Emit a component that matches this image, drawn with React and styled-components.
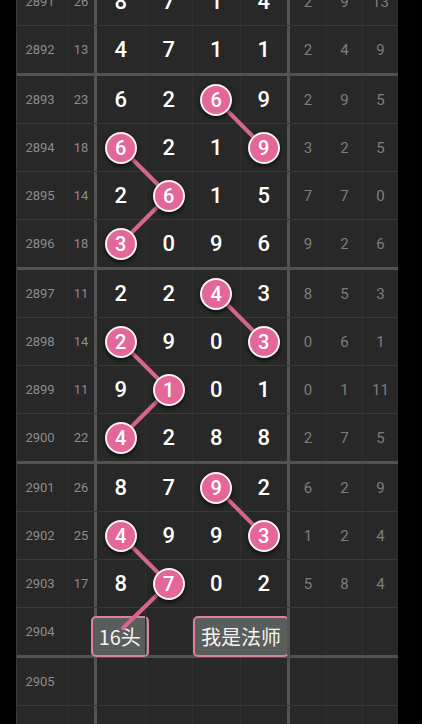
import React from 'react'
import styled, { createGlobalStyle } from 'styled-components'

const GlobalStyle = createGlobalStyle`
  html, body {
    margin: 0;
    background: #000;
  }
  body {
    font-family: Roboto, "Noto Sans CJK SC", sans-serif;
    overflow: hidden;
  }
`

const ROW_H = 47
const COLS = '50px 27px 50.5px 47.5px 47.5px 47.5px 39px 36px 36px'
// centres of the four digit columns, measured from the board's inner left edge
const DIGIT_X = [103.75, 151.75, 199.25, 246.75]

const Board = styled.div`
  position: relative;
  width: 382px;
  margin: -22px 0 0 16px;
  box-sizing: border-box;
  border-left: 1px solid #3a3a3a;
  background: #282828;
`

const Row = styled.div`
  display: grid;
  grid-template-columns: ${COLS};
  height: ${ROW_H}px;
  box-sizing: content-box;
  border-bottom: ${({ $end }) => ($end ? '3px solid #525252' : '1px solid #393939')};
`

const Cell = styled.div`
  display: flex;
  align-items: center;
  justify-content: center;
  box-sizing: border-box;
  min-width: 0;
  border-left: ${({ $sep }) =>
    $sep === 'thick'
      ? '3px solid #525252'
      : $sep === 'thin'
      ? '1px solid #303030'
      : $sep === 'faint'
      ? '1px solid #2d2d2d'
      : 'none'};
  grid-column: ${({ $span }) => ($span ? `span ${$span}` : 'auto')};
`

const Period = styled(Cell)`
  padding-right: 4px;
  color: #8c8c8c;
  font-size: 13px;
`

const Sum = styled(Cell)`
  color: #8c8c8c;
  font-size: 13px;
`

const Digit = styled(Cell)`
  color: #fff;
  font-size: 22px;
  font-weight: 500;
`

const Small = styled(Cell)`
  color: #7e7e7e;
  font-size: 15px;
`

const Ball = styled.span`
  position: relative;
  z-index: 2;
  width: 32px;
  height: 32px;
  box-sizing: border-box;
  border-radius: 50%;
  border: 2px solid #fbf3f6;
  background: #e4679a;
  box-shadow: 0 2px 4px rgba(0, 0, 0, 0.7);
  display: flex;
  align-items: center;
  justify-content: center;
  color: #fff;
  font-size: 20px;
  font-weight: 500;
`

const TagCell = styled(Cell)`
  align-items: flex-end;
`

const Tag = styled.span`
  height: 41px;
  margin: 0 0 -2px ${({ $shift }) => $shift || 0}px;
  padding: 0 ${({ $pad }) => $pad}px;
  box-sizing: border-box;
  display: flex;
  align-items: center;
  border: 2px solid #d9819f;
  border-radius: 5px;
  background: #595d5b;
  color: #f4f4f4;
  font-size: 20px;
  font-family: "Noto Sans CJK SC", Roboto, sans-serif;
  white-space: nowrap;
`

const Links = styled.svg`
  position: absolute;
  left: 0;
  top: 0;
  z-index: 1;
  pointer-events: none;
`

const rows = [
  { no: 2891, sum: 26, d: [8, 7, 1, 4], r: [2, 9, 13] },
  { no: 2892, sum: 13, d: [4, 7, 1, 1], r: [2, 4, 9], end: true },
  { no: 2893, sum: 23, d: [6, 2, 6, 9], hit: [2], r: [2, 9, 5] },
  { no: 2894, sum: 18, d: [6, 2, 1, 9], hit: [0, 3], r: [3, 2, 5] },
  { no: 2895, sum: 14, d: [2, 6, 1, 5], hit: [1], r: [7, 7, 0] },
  { no: 2896, sum: 18, d: [3, 0, 9, 6], hit: [0], r: [9, 2, 6], end: true },
  { no: 2897, sum: 11, d: [2, 2, 4, 3], hit: [2], r: [8, 5, 3] },
  { no: 2898, sum: 14, d: [2, 9, 0, 3], hit: [0, 3], r: [0, 6, 1] },
  { no: 2899, sum: 11, d: [9, 1, 0, 1], hit: [1], r: [0, 1, 11] },
  { no: 2900, sum: 22, d: [4, 2, 8, 8], hit: [0], r: [2, 7, 5], end: true },
  { no: 2901, sum: 26, d: [8, 7, 9, 2], hit: [2], r: [6, 2, 9] },
  { no: 2902, sum: 25, d: [4, 9, 9, 3], hit: [0, 3], r: [1, 2, 4] },
  { no: 2903, sum: 17, d: [8, 7, 0, 2], hit: [1], r: [5, 8, 4] },
  { no: 2904, tags: true, end: true },
  { no: 2905 },
  { no: '' },
]

const chains = [
  [[2, 2], [3, 3]],
  [[3, 0], [4, 1], [5, 0]],
  [[6, 2], [7, 3]],
  [[7, 0], [8, 1], [9, 0]],
  [[10, 2], [11, 3]],
  [[11, 0], [12, 1], [106, 650]],
]

function rowCentres() {
  let y = 0
  return rows.map(row => {
    const c = y + ROW_H / 2
    y += ROW_H + (row.end ? 3 : 1)
    return c
  })
}

const colSep = i => (i === 0 ? 'thick' : 'thin')

function EmptyCells() {
  return (
    <>
      {[0, 1, 2, 3].map(i => <Digit key={'d' + i} $sep={colSep(i)} />)}
      {[0, 1, 2].map(i => <Small key={'s' + i} $sep={colSep(i)} />)}
    </>
  )
}

export default function App() {
  const centres = rowCentres()
  const height = centres[centres.length - 1] + ROW_H / 2

  const point = p => (p[0] > 20 ? p : [DIGIT_X[p[1]], centres[p[0]]])

  return (
    <>
      <GlobalStyle />
      <Board>
        {rows.map((row, idx) => (
          <Row key={idx} $end={row.end}>
            <Period>{row.no}</Period>
            <Sum $sep="faint">{row.sum}</Sum>
            {row.d &&
              row.d.map((n, i) => (
                <Digit key={i} $sep={colSep(i)}>
                  {row.hit && row.hit.includes(i) ? <Ball>{n}</Ball> : n}
                </Digit>
              ))}
            {row.d &&
              row.r.map((n, i) => (
                <Small key={i} $sep={colSep(i)}>
                  {n}
                </Small>
              ))}
            {row.tags && (
              <>
                <TagCell $sep="thick">
                  <Tag $pad={6} $shift={-2}>16头</Tag>
                </TagCell>
                <Digit $sep="thin" />
                <TagCell $sep="thin" $span={2}>
                  <Tag $pad={6} $shift={2}>我是法师</Tag>
                </TagCell>
                {[0, 1, 2].map(i => <Small key={i} $sep={colSep(i)} />)}
              </>
            )}
            {!row.d && !row.tags && <EmptyCells />}
          </Row>
        ))}
        <Links width="381" height={height}>
          {chains.map((chain, ci) => (
            <polyline
              key={ci}
              points={chain.map(p => point(p).join(',')).join(' ')}
              fill="none"
              stroke="#d6668f"
              strokeWidth="4"
              strokeLinecap="round"
              strokeLinejoin="round"
            />
          ))}
        </Links>
      </Board>
    </>
  )
}
